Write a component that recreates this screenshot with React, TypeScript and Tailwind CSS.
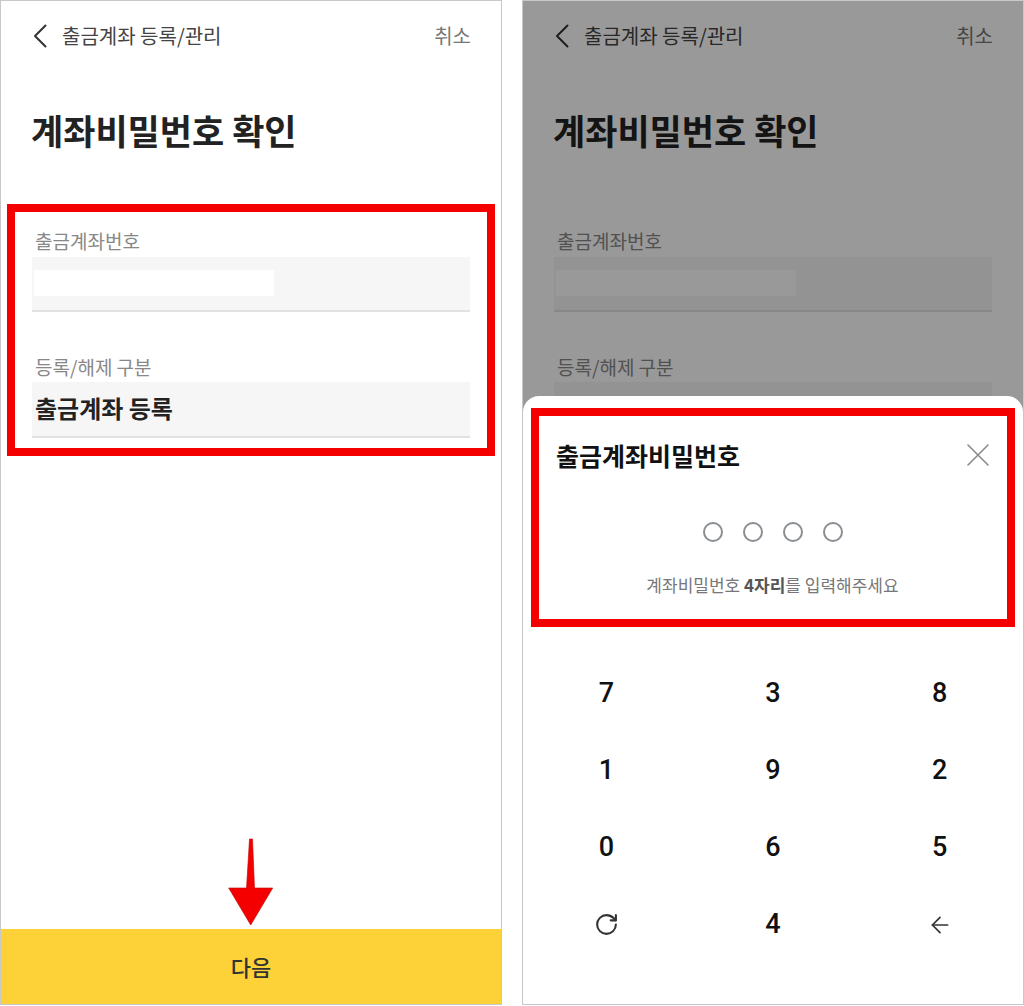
import clsx from 'clsx';
import { RotateCw, ArrowLeft } from 'lucide-react';

const KR = "font-['Noto_Sans_CJK_KR','Noto_Sans',sans-serif]";

function ChevronLeftIcon() {
  return (
    <svg width="14" height="24" viewBox="0 0 14 24" fill="none" stroke="#333" strokeWidth="2" strokeLinecap="round" strokeLinejoin="round">
      <polyline points="12.5,1.5 2,12 12.5,22.5" />
    </svg>
  );
}

function CloseIcon() {
  return (
    <svg width="22" height="22" viewBox="0 0 22 22" fill="none" stroke="#8a8a8a" strokeWidth="1.6" strokeLinecap="round">
      <path d="M1 1 21 21M21 1 1 21" />
    </svg>
  );
}

/** 출금계좌 등록 화면 — 양쪽 패널에서 같은 내용 사용, 왼쪽만 빨간 강조 박스 */
function AccountScreen({ highlight }: { highlight: boolean }) {
  return (
    <div className="flex flex-col">
      <header className="flex h-[70px] items-center justify-between pl-[32px] pr-[30px]">
        <div className="flex items-center gap-[15px]">
          <ChevronLeftIcon />
          <span className="text-[20px] leading-[26px] text-[#444]">출금계좌 등록/관리</span>
        </div>
        <span className="text-[20px] leading-[26px] text-[#777]">취소</span>
      </header>

      <h1 className="mt-[38px] pl-[30px] text-[35px] font-bold leading-[42px] text-[#222]">
        계좌비밀번호 확인
      </h1>

      <div
        className={clsx(
          'mx-[6px] mt-[53px] border-[8px] px-[17px] pt-[16px] pb-[10px]',
          highlight ? 'border-[#f50000]' : 'border-transparent'
        )}
      >
        <div className="pl-[3px] text-[19px] leading-[26px] text-[#888]">출금계좌번호</div>
        <div className="mt-[3px] h-[55px] border-b-2 border-[#e2e2e2] bg-[#f6f6f6] pl-[2px] pt-[13px]">
          <div className="h-[26px] w-[240px] bg-white" />
        </div>

        <div className="mt-[42px] pl-[3px] text-[19px] leading-[26px] text-[#888]">등록/해제 구분</div>
        <div className="mt-[2px] h-[56px] border-b-2 border-[#e2e2e2] bg-[#f6f6f6] pl-[3px] pt-[10px]">
          <span className="text-[24px] font-bold leading-[32px] text-[#222]">출금계좌 등록</span>
        </div>
      </div>
    </div>
  );
}

const keys = ['7', '3', '8', '1', '9', '2', '0', '6', '5', 'reset', '4', 'back'];

function PinSheet() {
  return (
    <div className="absolute inset-x-0 bottom-0 top-[395px] rounded-t-[16px] bg-white">
      <div className="mx-[8px] mt-[12px] border-[8px] border-[#f50000] pl-[17px] pr-[18px] pt-[22px] pb-[22px]">
        <div className="flex items-center justify-between">
          <span className="text-[25px] font-bold leading-[34px] text-[#111]">출금계좌비밀번호</span>
          <CloseIcon />
        </div>
        <div className="mt-[50px] flex justify-center gap-[20px]">
          {[0, 1, 2, 3].map(i => (
            <div key={i} className="h-[20px] w-[20px] rounded-full border-[2.5px] border-[#8a8e93]" />
          ))}
        </div>
        <p className="mt-[31px] text-center text-[17px] leading-[24px] text-[#777]">
          계좌비밀번호 <b className="font-bold text-[#555]">4자리</b>를 입력해주세요
        </p>
      </div>

      <div className="mt-[28px] grid grid-cols-3">
        {keys.map(k => (
          <div key={k} className="flex h-[77px] items-center justify-center">
            {k === 'reset' ? (
              <RotateCw size={25} strokeWidth={2} color="#333" />
            ) : k === 'back' ? (
              <ArrowLeft size={26} strokeWidth={1.6} color="#333" />
            ) : (
              <span className="font-['Roboto',sans-serif] text-[27px] font-medium leading-none text-[#111]">{k}</span>
            )}
          </div>
        ))}
      </div>
    </div>
  );
}

export default function App() {
  return (
    <div className={clsx('flex h-[1006px] w-[1024px] gap-[20px] bg-white', KR)}>
      {/* 왼쪽: 입력 확인 화면 */}
      <div className="relative flex h-[1005px] w-[502px] flex-col border border-[#c8c8c8] bg-white">
        <AccountScreen highlight />
        <div className="flex-1" />
        <button className="h-[75px] w-full bg-[#fdd238] text-[22px] font-medium text-[#333]">다음</button>
        <svg className="absolute left-[225px] top-[837px]" width="50" height="90" viewBox="0 0 50 90">
          <polygon points="23.5,1 26.5,1 28.5,50 46.7,50 24.7,87 2.7,50 20.5,50" fill="#f50000" stroke="#c00000" strokeWidth="0.6" />
        </svg>
      </div>

      {/* 오른쪽: 비밀번호 입력 시트 */}
      <div className="relative h-[1005px] w-[502px] overflow-hidden border border-[#c8c8c8] bg-white">
        <AccountScreen highlight={false} />
        <div className="absolute inset-0 bg-black/40" />
        <PinSheet />
      </div>
    </div>
  );
}
